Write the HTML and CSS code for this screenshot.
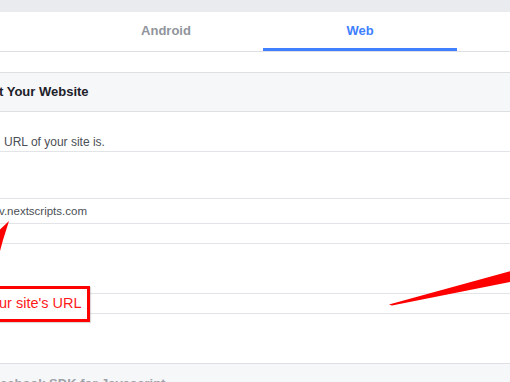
FILE: index.html
```html
<!DOCTYPE html>
<html>
<head>
<meta charset="utf-8">
<link rel="stylesheet" href="styles.css">
</head>
<body>
<div class="page">
  <div class="topbar"></div>
  <nav class="tabs">
    <div class="tab">Android</div>
    <div class="tab active">Web</div>
  </nav>
  <div class="spacer"></div>
  <div class="section-head">t Your Website</div>
  <div class="row row-desc">URL of your site is.</div>
  <div class="row row-blank1"></div>
  <div class="row row-url">v.nextscripts.com</div>
  <div class="row row-blank2"></div>
  <div class="row row-blank3"></div>
  <div class="row row-blank4"></div>
  <div class="row row-blank5"></div>
  <div class="section-foot">cebook SDK for Javascript</div>

  <svg class="arrows" width="510" height="382" viewBox="0 0 510 382">
    <polygon points="9,221 -12,241 0,251 3,240" fill="#ff0000"/>
    <polygon points="389,304.5 520,268.5 520,280 392,305.5" fill="#ff0000"/>
  </svg>
  <div class="callout">ur site's URL</div>
</div>
</body>
</html>
```
FILE: styles.css
```css
* { box-sizing: border-box; }
html, body { margin: 0; padding: 0; background: #ffffff; }
body {
  font-family: "Liberation Sans", Arial, Helvetica, sans-serif;
  width: 510px;
  height: 382px;
  overflow: hidden;
}
.page { position: relative; width: 510px; height: 382px; overflow: hidden; }
.topbar { height: 12px; background: #e9ebee; }
.tabs {
  display: flex;
  height: 40px;
  padding-left: 69px;
  border-bottom: 1px solid #dddfe2;
  background: #ffffff;
}
.tab {
  width: 194px;
  height: 39px;
  display: flex;
  align-items: center;
  justify-content: center;
  font-size: 13px;
  font-weight: bold;
  color: #90949c;
  padding-bottom: 3px;
}
.tab.active {
  color: #4080ff;
  border-bottom: 3px solid #4080ff;
  padding-bottom: 0;
}
.spacer { height: 20px; }
.section-head {
  height: 40px;
  line-height: 38px;
  background: #f6f7f9;
  border-top: 1px solid #dddfe2;
  border-bottom: 1px solid #dddfe2;
  font-size: 13px;
  font-weight: bold;
  color: #1d2129;
  margin-left: -1px;
  padding-left: 0;
}
.row { border-bottom: 1px solid #e2e4e7; }
.row-desc {
  padding: 22px 0 1px 4px;
  line-height: 16px;
  font-size: 12px;
  color: #4b4f56;
  height: 40px;
}
.row-blank1 { height: 47px; }
.row-url {
  height: 25px;
  line-height: 24px;
  font-size: 11.5px;
  color: #4b4f56;
  margin-left: -1px;
}
.row-blank2 { height: 20px; }
.row-blank3 { height: 50px; }
.row-blank4 { height: 20px; }
.row-blank5 { height: 49px; border-bottom: none; }
.section-foot {
  height: 40px;
  background: #f6f7f9;
  border-top: 1px solid #dddfe2;
  font-size: 13px;
  font-weight: bold;
  color: #9da1a8;
  padding-top: 12px;
  line-height: 16px;
}
.arrows { position: absolute; left: 0; top: 0; }
.callout {
  position: absolute;
  left: -10px;
  top: 286px;
  width: 100px;
  height: 36px;
  border: 3px solid #ff0000;
  background: #ffffff;
  color: #ff1a1a;
  font-size: 14.5px;
  line-height: 28px;
  padding-left: 6px;
  box-shadow: 1px 1px 1px rgba(0,0,0,0.15);
  white-space: nowrap;
}
```
